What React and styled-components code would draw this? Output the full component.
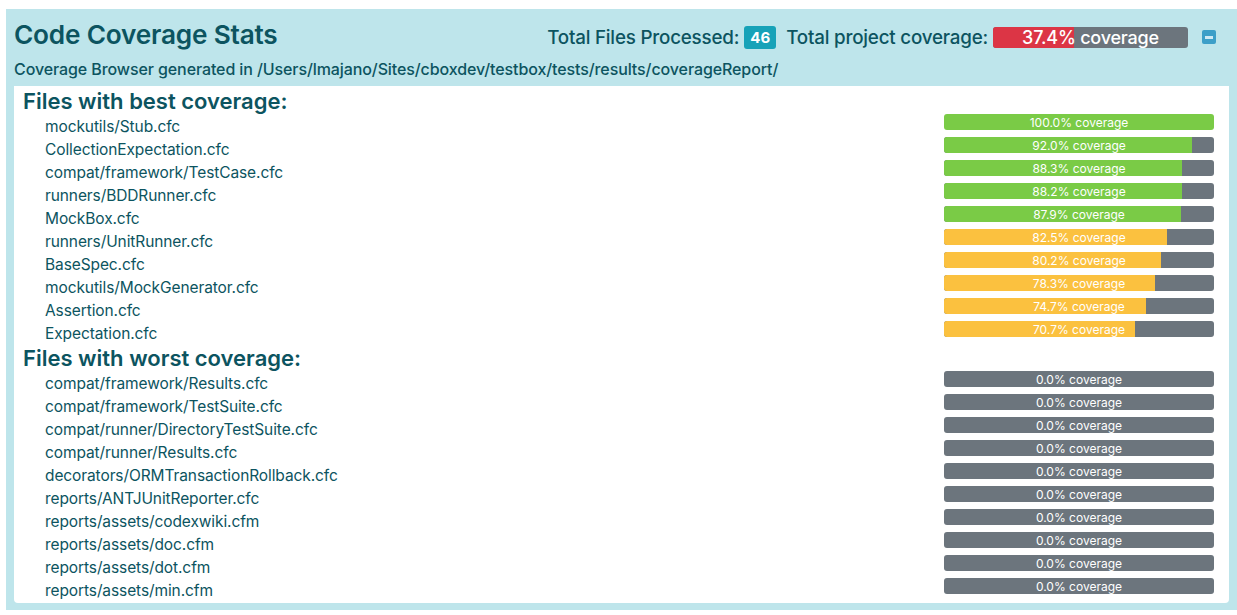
import React from "react";
import styled, { createGlobalStyle } from "styled-components";

const best = [
  ["mockutils/Stub.cfc", 100.0],
  ["CollectionExpectation.cfc", 92.0],
  ["compat/framework/TestCase.cfc", 88.3],
  ["runners/BDDRunner.cfc", 88.2],
  ["MockBox.cfc", 87.9],
  ["runners/UnitRunner.cfc", 82.5],
  ["BaseSpec.cfc", 80.2],
  ["mockutils/MockGenerator.cfc", 78.3],
  ["Assertion.cfc", 74.7],
  ["Expectation.cfc", 70.7],
];

const worst = [
  "compat/framework/Results.cfc",
  "compat/framework/TestSuite.cfc",
  "compat/runner/DirectoryTestSuite.cfc",
  "compat/runner/Results.cfc",
  "decorators/ORMTransactionRollback.cfc",
  "reports/ANTJUnitReporter.cfc",
  "reports/assets/codexwiki.cfm",
  "reports/assets/doc.cfm",
  "reports/assets/dot.cfm",
  "reports/assets/min.cfm",
].map((f) => [f, 0]);

// green over 85, yellow over 50, red below
const barColor = (pct) => (pct >= 85 ? "#7acb46" : pct >= 50 ? "#fbc13f" : "#dc3545");

const App = () => {
  return (
    <>
      <GlobalStyle />
      <Panel>
        <Header>
          <Title>Code Coverage Stats</Title>
          <Stats>
            <StatLabel>Total Files Processed:</StatLabel>
            <Badge>46</Badge>
            <StatLabel style={{ marginLeft: "10px" }}>Total project coverage:</StatLabel>
            <TotalBar>
              <TotalFill style={{ width: "41.5%" }} />
              <TotalText>37.4% coverage</TotalText>
            </TotalBar>
            <Collapse>
              <span />
            </Collapse>
          </Stats>
        </Header>
        <Subtitle>
          Coverage Browser generated in /Users/lmajano/Sites/cboxdev/testbox/tests/results/coverageReport/
        </Subtitle>
        <Body>
          <Section>Files with best coverage:</Section>
          {best.map(([file, pct]) => (
            <FileRow key={file}>
              <FileName>{file}</FileName>
              <Bar>
                <Fill color={barColor(pct)} style={{ width: pct + "%" }} />
                <BarText>{pct.toFixed(1)}% coverage</BarText>
              </Bar>
            </FileRow>
          ))}
          <Section>Files with worst coverage:</Section>
          {worst.map(([file, pct]) => (
            <FileRow key={file}>
              <FileName>{file}</FileName>
              <Bar>
                <BarText>{pct.toFixed(1)}% coverage</BarText>
              </Bar>
            </FileRow>
          ))}
        </Body>
      </Panel>
    </>
  );
};

const GlobalStyle = createGlobalStyle`
  html, body {
    margin: 0;
    background: #fff;
    overflow: hidden;
  }
  body {
    font-family: Inter, "Liberation Sans", sans-serif;
    color: #0c5460;
  }
`;

const Panel = styled.div`
  margin: 9px 0 0 6px;
  padding: 9px 8px 7px 8px;
  background: #bee5eb;
`;

const Header = styled.div`
  display: flex;
  justify-content: space-between;
  align-items: center;
`;

const Title = styled.h1`
  margin: 0;
  font-size: 26.2px;
  line-height: 34px;
  font-weight: 600;
  letter-spacing: -0.2px;
`;

const Stats = styled.div`
  display: flex;
  align-items: center;
  padding-top: 4px;
`;

const StatLabel = styled.span`
  font-size: 18.8px;
  font-weight: 500;
  letter-spacing: -0.2px;
`;

const Badge = styled.span`
  margin-left: 5px;
  background: #17a2b8;
  color: #fff;
  font-size: 15px;
  font-weight: 700;
  height: 23px;
  width: 32px;
  border-radius: 3px;
  display: flex;
  align-items: center;
  justify-content: center;
`;

const TotalBar = styled.div`
  position: relative;
  margin-left: 5px;
  width: 195px;
  height: 21px;
  border-radius: 3px;
  background: #6c757d;
  overflow: hidden;
`;

const TotalFill = styled.div`
  height: 100%;
  background: #dc3545;
`;

const TotalText = styled.span`
  position: absolute;
  inset: 0;
  display: flex;
  align-items: center;
  justify-content: center;
  color: #fff;
  font-size: 18px;
  font-weight: 500;
  letter-spacing: -0.2px;
`;

const Collapse = styled.div`
  margin: 0 13px 0 14px;
  width: 14px;
  height: 14px;
  border-radius: 2px;
  background: #3d9fc8;
  display: flex;
  align-items: center;
  justify-content: center;
  span {
    width: 8px;
    height: 3px;
    background: #cfe9f3;
  }
`;

const Subtitle = styled.div`
  margin-top: 7px;
  font-size: 16px;
  line-height: 20px;
  font-weight: 500;
  letter-spacing: -0.1px;
`;

const Body = styled.div`
  margin-top: 7px;
  background: #fff;
  border-radius: 0 0 4px 4px;
  padding: 2px 15px 1px 9px;
`;

const Section = styled.h3`
  margin: 0;
  font-size: 22px;
  line-height: 27px;
  font-weight: 600;
`;

const FileRow = styled.div`
  display: flex;
  align-items: flex-start;
  justify-content: space-between;
  height: 23px;
  padding-left: 22px;
`;

const FileName = styled.span`
  font-size: 15.5px;
  line-height: 23px;
  letter-spacing: -0.1px;
`;

const Bar = styled.div`
  position: relative;
  margin-top: -1px;
  width: 270px;
  height: 16px;
  border-radius: 3px;
  background: #6c757d;
  overflow: hidden;
`;

const Fill = styled.div`
  height: 100%;
  background: ${(p) => p.color};
`;

const BarText = styled.span`
  position: absolute;
  inset: 0;
  display: flex;
  align-items: center;
  justify-content: center;
  color: #fff;
  font-size: 12px;
`;

export default App;
